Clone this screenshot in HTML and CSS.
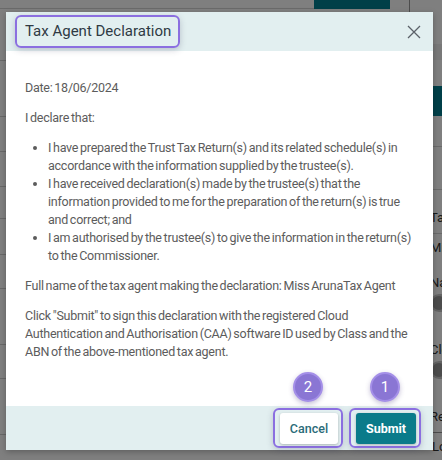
FILE: index.html
```html
<!DOCTYPE html>
<html lang="en">

<head>
  <meta charset="UTF-8">
  <meta name="viewport" content="width=device-width">
  <title>Tax Agent Declaration</title>
  <link rel="stylesheet" href="styles.css">
</head>

<body>
  <div class="page">
    <div class="topbar">
      <span class="topbar-fill"></span>
      <span class="topbar-tab"></span>
      <span class="topbar-cell"></span>
    </div>
    <div class="rows">
      <div class="row" style="height:43px"></div>
      <div class="row" style="height:56px"></div>
      <div class="row" style="height:35px"></div>
      <div class="row" style="height:35px"></div>
      <div class="row" style="height:32px"></div>
      <div class="row" style="height:36px"></div>
      <div class="row" style="height:34px"></div>
      <div class="row" style="height:56px"></div>
      <div class="row" style="height:34px"></div>
      <div class="row" style="height:56px"></div>
    </div>
    <div class="side">
      <div class="side-strip"></div>
      <div class="side-btn"></div>
      <div class="side-row"></div>
      <div class="side-row side-tax">Tax</div>
      <div class="side-row side-miss">Miss</div>
      <div class="side-label">Name</div>
      <div class="side-toggle"><span class="knob"></span></div>
      <div class="side-label side-gap">Clear</div>
      <div class="side-toggle"><span class="knob"></span></div>
      <div class="side-label side-gap">Review</div>
      <div class="side-box">Lodge</div>
    </div>
  </div>
  <div class="overlay"></div>

  <div class="modal">
    <header class="modal-header">
      <h2 class="modal-title highlight">Tax Agent Declaration</h2>
      <button class="close" aria-label="Close">
        <svg width="14" height="14" viewBox="0 0 14 14">
          <path d="M1 1 L13 13 M13 1 L1 13" stroke="#5b6169" stroke-width="1.3" fill="none"/>
        </svg>
      </button>
    </header>
    <div class="modal-body">
      <p>Date: 18/06/2024</p>
      <p>I declare that:</p>
      <ul>
        <li>I have prepared the Trust Tax Return(s) and its related schedule(s) in accordance with the information supplied by the trustee(s).</li>
        <li>I have received declaration(s) made by the trustee(s) that the information provided to me for the preparation of the return(s) is true and correct; and</li>
        <li>I am authorised by the trustee(s) to give the information in the return(s) to the Commissioner.</li>
      </ul>
      <p>Full name of the tax agent making the declaration: Miss ArunaTax Agent</p>
      <p>Click "Submit" to sign this declaration with the registered Cloud Authentication and Authorisation (CAA) software ID used by Class and the ABN of the above-mentioned tax agent.</p>
    </div>
    <footer class="modal-footer">
      <div class="step-wrap">
        <span class="step">2</span>
        <span class="highlight btn-ring"><button class="btn btn-cancel">Cancel</button></span>
      </div>
      <div class="step-wrap">
        <span class="step">1</span>
        <span class="highlight btn-ring"><button class="btn btn-submit">Submit</button></span>
      </div>
    </footer>
  </div>
</body>

</html>
```

FILE: styles.css
```css
* {
  box-sizing: border-box;
}

html,
body {
  margin: 0;
  padding: 0;
  width: 442px;
  height: 460px;
  overflow: hidden;
  font-family: 'Roboto', 'Liberation Sans', sans-serif;
  --teal: #0a7b8a;
  --header-bg: #e2eff0;
  --ring: #8b6fe0;
  --step-fill: #8a76d4;
  --text: #5c5c5c;
}

/* page behind the dialog */
.page {
  position: relative;
  width: 442px;
  height: 460px;
  background: #fff;
}

.topbar {
  display: flex;
  height: 18px;
}

.topbar-fill {
  flex: 0 0 314px;
  height: 9px;
  border-bottom: 1px solid #d4d4d4;
}

.topbar-tab {
  flex: 0 0 76px;
  height: 9px;
  background: #007e90;
}

.topbar-cell {
  flex: 1;
  border-left: 1px solid #9a9a9a;
  margin-left: 19px;
  height: 55px;
  border-bottom: 1px solid #9a9a9a;
}

.rows {
  width: 300px;
}

.row {
  border-bottom: 1px solid #d0d0d0;
}

.side {
  position: absolute;
  top: 44px;
  left: 430px;
  width: 60px;
  display: flex;
  flex-direction: column;
  font-size: 13px;
  line-height: 14px;
  color: #333;
  overflow: hidden;
}

.side-strip {
  height: 16px;
  background: #f0f0f0;
  margin-bottom: 26px;
}

.side-btn {
  height: 30px;
  background: #007e90;
  margin-bottom: 30px;
}

.side-row {
  height: 43px;
  border-top: 1px solid #d4d4d4;
}

.side-tax {
  height: 44px;
  padding: 21px 0 0 0;
}

.side-miss {
  height: 30px;
  padding: 7px 0 0 0;
}

.side-label {
  padding: 13px 0 4px 0;
}

.side-gap {
  padding-top: 25px;
}

.side-toggle {
  width: 36px;
  height: 18px;
  border-radius: 9px;
  background: #c8c8c8;
  margin-bottom: 6px;
  padding: 2px;
}

.knob {
  display: block;
  width: 14px;
  height: 14px;
  border-radius: 50%;
  background: #999;
}

.side-box {
  margin: 4px 0 0 -7px;
  border: 1px solid #999;
  border-radius: 3px;
  padding: 7px 8px;
}

.overlay {
  position: absolute;
  inset: 0;
  background: rgba(0, 0, 0, 0.5);
}

/* dialog */
.modal {
  position: absolute;
  top: 12px;
  left: 6px;
  width: 427px;
  height: 438px;
  background: #fff;
  display: flex;
  flex-direction: column;
  box-shadow: 0 2px 6px rgba(0, 0, 0, 0.25);
}

.highlight {
  border: 2px solid var(--ring);
  border-radius: 6px;
  box-shadow: 0 2px 6px rgba(60, 60, 90, 0.25);
}

.modal-header {
  height: 39px;
  background: var(--header-bg);
  display: flex;
  align-items: center;
  justify-content: space-between;
  padding: 0 12px 0 9px;
}

.modal-title {
  margin: 0;
  font-weight: 400;
  font-size: 15px;
  color: #2f3a44;
  padding: 4px 7px 5px 8px;
  line-height: 20px;
}

.close {
  border: 0;
  background: none;
  padding: 0;
  width: 14px;
  height: 14px;
  display: flex;
}

.modal-body {
  flex: 1;
  padding: 28px 19px 0 19px;
  font-size: 12.5px;
  letter-spacing: -0.25px;
  word-spacing: -1px;
  line-height: 18px;
  color: var(--text);
}

.modal-body p {
  margin: 0 0 12px 0;
}

.modal-body ul {
  margin: 0 0 12px 0;
  padding-left: 23px;
}

.modal-footer {
  height: 44px;
  background: var(--header-bg);
  display: flex;
  justify-content: flex-end;
  align-items: center;
  gap: 6px;
  padding-right: 12px;
}

.step-wrap {
  position: relative;
}

.step {
  position: absolute;
  left: 50%;
  top: -36px;
  transform: translateX(-50%);
  width: 30px;
  height: 30px;
  border-radius: 50%;
  background: var(--step-fill);
  border: 2px solid #a48fe8;
  color: #fff;
  font-size: 15px;
  display: flex;
  align-items: center;
  justify-content: center;
  box-shadow: 0 2px 5px rgba(60, 40, 120, 0.3);
}

.btn-ring {
  display: flex;
  padding: 3px 3px 2px 5px;
}

.btn {
  border: 0;
  border-radius: 3px;
  height: 31px;
  font-family: inherit;
  font-size: 12.5px;
  font-weight: 500;
  cursor: pointer;
  box-shadow: 0 1px 3px rgba(0, 0, 0, 0.25);
}

.btn-cancel {
  width: 58px;
  background: #fff;
  color: #2b6c79;
}

.btn-submit {
  width: 60px;
  background: var(--teal);
  color: #fff;
  font-weight: 700;
}
```
